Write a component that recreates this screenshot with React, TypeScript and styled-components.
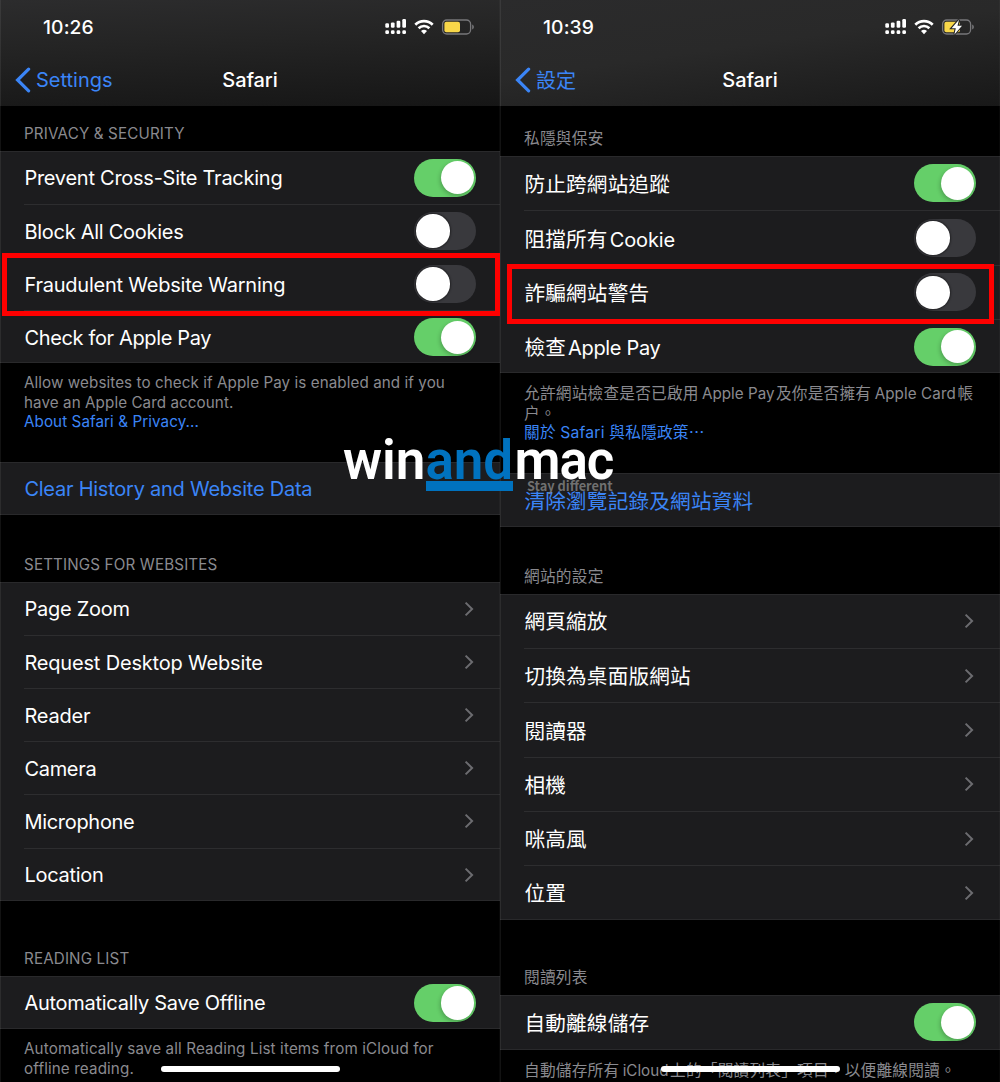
import React from "react";
import styled, { createGlobalStyle, css } from "styled-components";

const GlobalStyle = createGlobalStyle`
  *, *::before, *::after { box-sizing: border-box; }
  body { margin: 0; background: #000; overflow: hidden; }
`;

const LATIN = `"Inter", "Noto Sans CJK TC", sans-serif`;
const CJK = `"Inter", "Noto Sans CJK TC", "Noto Sans", sans-serif`;
const BLUE = "#3b85f7";

const Stage = styled.main`
  position: relative;
  display: grid;
  grid-template-columns: 500px 500px;
  width: 1000px;
  height: 1082px;
  overflow: hidden;
  background: #000;
`;

const Phone = styled.section<{ $cjk?: boolean }>`
  position: relative;
  display: flex;
  flex-direction: column;
  height: 1082px;
  overflow: hidden;
  background: #000;
  color: #fff;
  font-family: ${(p) => (p.$cjk ? CJK : LATIN)};
  --body-size: ${(p) => (p.$cjk ? "20.6px" : "20px")};
  --body-track: ${(p) => (p.$cjk ? "0.22px" : "-0.2px")};
  --note-size: ${(p) => (p.$cjk ? "15.7px" : "15.2px")};
  --note-track: ${(p) => (p.$cjk ? "0.19px" : "0.08px")};
  --row: ${(p) => (p.$cjk ? "54.3px" : "53.1px")};
  --label-drop: ${(p) => (p.$cjk ? "3px" : "1px")};
  --note-top: ${(p) => (p.$cjk ? "11px" : "10px")};
  &::after {
    content: "";
    position: absolute;
    inset: 0;
    box-shadow: inset 1px 0 rgba(255, 255, 255, 0.07), inset -1px 0 rgba(255, 255, 255, 0.03);
    pointer-events: none;
  }
`;

const Header = styled.header<{ $light?: boolean }>`
  flex: none;
  height: 106px;
  background: ${(p) =>
    p.$light
      ? "linear-gradient(172deg, #2b2b2c 0%, #292929 45%, #181818 100%)"
      : "linear-gradient(178deg, #2c2c2d 0%, #242424 40%, #161616 100%)"};
`;

const StatusBar = styled.div`
  display: flex;
  align-items: center;
  justify-content: space-between;
  height: 54px;
  padding: 0 26px 0 43px;
`;

const Clock = styled.span`
  font-size: 19.3px;
  font-weight: 550;
  line-height: 24px;
  letter-spacing: 0.1px;
`;

const StatusIcons = styled.svg`
  display: block;
  width: 89px;
  height: 18px;
`;

const NavBar = styled.nav`
  display: grid;
  grid-template-columns: 1fr auto 1fr;
  align-items: center;
  height: 52px;
  padding-left: 15px;
`;

const Back = styled.a`
  display: flex;
  align-items: center;
  gap: 5px;
  color: ${BLUE};
  font-size: 20px;
  line-height: 28px;
`;

const BackText = styled.span`
  padding-top: calc(var(--label-drop) - 1px);
`;

const BackIcon = styled.svg`
  display: block;
  width: 16px;
  height: 26px;
`;

const Title = styled.h1`
  margin: 0 0 0 -15px;
  font-size: 20px;
  font-weight: 550;
  line-height: 28px;
  letter-spacing: -0.1px;
`;

const Caption = styled.h2<{ $height: number }>`
  flex: none;
  display: flex;
  align-items: flex-end;
  height: ${(p) => p.$height}px;
  margin: 0;
  padding: 0 24px 8px;
  color: #8a8a8f;
  font-size: var(--note-size);
  font-weight: 400;
  line-height: 19px;
  letter-spacing: calc(var(--note-track) + 0.06px);
`;

const Group = styled.div`
  flex: none;
  background: #1c1c1e;
  box-shadow: inset 0 1px #29292b, inset 0 -1px #29292b;
`;

const Row = styled.div`
  display: flex;
  align-items: stretch;
  height: var(--row);
  padding-left: 24px;
`;

const RowBody = styled.div<{ $divided: boolean }>`
  flex: 1;
  display: flex;
  align-items: center;
  justify-content: space-between;
  padding-right: 24px;
  ${(p) => p.$divided && css`border-top: 1px solid #2d2d2f;`}
`;

const Label = styled.span<{ $link?: boolean; $track?: number }>`
  padding: var(--label-drop) 0 0 0.4px;
  color: ${(p) => (p.$link ? BLUE : "#fff")};
  font-size: var(--body-size);
  line-height: 28px;
  letter-spacing: ${(p) => (p.$track !== undefined ? `${p.$track}px` : "var(--body-track)")};
  white-space: pre;
`;

const Switch = styled.span<{ $on: boolean }>`
  display: flex;
  align-items: center;
  justify-content: ${(p) => (p.$on ? "flex-end" : "flex-start")};
  width: 62px;
  height: 38px;
  padding: 0 2px;
  border-radius: 19px;
  background: ${(p) => (p.$on ? "#65cf69" : "#39393d")};
`;

const Knob = styled.i<{ $on: boolean }>`
  width: 33.5px;
  height: 33.5px;
  border-radius: 50%;
  background: #fff;
  box-shadow: ${(p) => (p.$on ? "-1px 2px 4px rgba(0,0,0,.22)" : "0 0 2px 1px rgba(0,0,0,.4)")};
`;

const Chevron = styled.svg`
  display: block;
  width: 12px;
  height: 18px;
`;

const Note = styled.div<{ $height?: number }>`
  flex: none;
  height: ${(p) => (p.$height ? `${p.$height}px` : "auto")};
  padding: var(--note-top) 0 0 24px;
  color: #8a8a8f;
  font-size: var(--note-size);
  line-height: 19.3px;
  letter-spacing: var(--note-track);
`;

const NoteLine = styled.div<{ $link?: boolean; $track?: number }>`
  height: 19.3px;
  white-space: pre;
  ${(p) => p.$link && css`color: ${BLUE};`}
  ${(p) => p.$track !== undefined && css`letter-spacing: ${p.$track}px;`}
`;

const Latin = styled.span<{ $small?: boolean; $track?: number }>`
  margin: ${(p) => (p.$small ? "0 1.5px 0 3.4px" : "0 0 0 2px")};
  font-size: ${(p) => (p.$small ? "15.2px" : "20px")};
  letter-spacing: ${(p) => p.$track ?? 0}px;
`;

const HomeBar = styled.div`
  position: absolute;
  left: 161px;
  top: 1066px;
  width: 178.5px;
  height: 6.4px;
  border-radius: 3.2px;
  background: #fff;
`;

const Highlight = styled.div<{ $x: number; $y: number; $w: number; $h: number }>`
  position: absolute;
  left: ${(p) => p.$x}px;
  top: ${(p) => p.$y}px;
  width: ${(p) => p.$w}px;
  height: ${(p) => p.$h}px;
  border: 5px solid #fe0000;
`;

const Watermark = styled.div`
  position: absolute;
  left: 343px;
  top: 430px;
  width: 272px;
  height: 64px;
`;

const Wordmark = styled.div`
  width: max-content;
  color: #fff;
  font: 600 56px/60px "Roboto", sans-serif;
  transform: scaleX(0.945);
  transform-origin: 0 0;
`;

const Accent = styled.span`
  color: #0072bf;
  margin-right: 1.5px;
`;

const Tail = styled.span`
  letter-spacing: -1.2px;
`;

const Underline = styled.div`
  position: absolute;
  left: 83px;
  top: 51px;
  width: 87px;
  height: 10px;
  background: #0072bf;
`;

const Tagline = styled.div`
  position: absolute;
  left: 184px;
  top: 46px;
  color: rgba(128, 128, 128, 0.85);
  font: 700 12.8px/20px "Noto Sans CJK TC", sans-serif;
  white-space: nowrap;
`;

function Status({ charging }: { charging?: boolean }) {
  const bars = [
    [0.3, 4.2],
    [5.9, 3.4],
    [11.6, 1.8],
    [17.3, 0],
  ];
  return (
    <StatusIcons viewBox="0 0 89 18">
      {bars.map(([x, y]) => (
        <g key={x} fill="#fff">
          <rect x={x} y={y + 1} width="3.7" height={8.7 - y} rx="1.2" />
          <rect x={x} y="12.3" width="3.7" height="3.8" rx="1.4" />
        </g>
      ))}
      <g fill="none" stroke="#fff" strokeWidth="2.7">
        <path d="M30.3 6.7a12.4 12.4 0 0 1 17.4 0" />
        <path d="M33.6 10.2a7.7 7.7 0 0 1 10.8 0" />
      </g>
      <path d="M39 16.3l-3-3.2a4.5 4.5 0 0 1 6 0z" fill="#fff" />
      <rect x="57.6" y="2" width="28" height="14" rx="4.2" fill="none" stroke="#77777a" strokeWidth="1.3" />
      <path d="M87.2 6.6c2.2.8 2.2 4 0 4.8z" fill="#77777a" />
      <rect x="59.4" y="3.8" width="15.6" height="10.4" rx="2" fill="#f8d749" />
      {charging && (
        <path
          d="M74 1.8l-7.4 8.4h4.2l-1.4 6.2 7.6-8.7h-4.5z"
          fill="#fff"
          stroke="#262626"
          strokeWidth="2.2"
          paintOrder="stroke"
        />
      )}
    </StatusIcons>
  );
}

function TopBar({ time, back, charging }: { time: string; back: string; charging?: boolean }) {
  return (
    <Header $light={charging}>
      <StatusBar>
        <Clock>{time}</Clock>
        <Status charging={charging} />
      </StatusBar>
      <NavBar>
        <Back>
          <BackIcon viewBox="0 0 16 26">
            <path d="M13.6 2.2L2.6 13l11 10.8" fill="none" stroke={BLUE} strokeWidth="3.2" strokeLinecap="round" strokeLinejoin="miter" />
          </BackIcon>
          <BackText>{back}</BackText>
        </Back>
        <Title>Safari</Title>
      </NavBar>
    </Header>
  );
}

type Item = { label: React.ReactNode; on?: boolean; link?: boolean; track?: number };

function List({ items }: { items: Item[] }) {
  return (
    <Group>
      {items.map((item, i) => (
        <Row key={i}>
          <RowBody $divided={i > 0}>
            <Label $link={item.link} $track={item.track}>
              {item.label}
            </Label>
            {item.on !== undefined ? (
              <Switch $on={item.on}>
                <Knob $on={item.on} />
              </Switch>
            ) : (
              !item.link && (
                <Chevron viewBox="0 0 12 18">
                  <path d="M1.6 2.6L8.1 9l-6.5 6.4" fill="none" stroke="#6c6c70" strokeWidth="2" />
                </Chevron>
              )
            )}
          </RowBody>
        </Row>
      ))}
    </Group>
  );
}

export default function App() {
  return (
    <>
      <GlobalStyle />
      <Stage>
        <Phone lang="en">
          <TopBar time="10:26" back="Settings" />
          <Caption $height={45}>PRIVACY &amp; SECURITY</Caption>
          <List
            items={[
              { label: "Prevent Cross-Site Tracking", on: true, track: -0.26 },
              { label: "Block All Cookies", on: false, track: -0.27 },
              { label: "Fraudulent Website Warning", on: false, track: -0.22 },
              { label: "Check for Apple Pay", on: true, track: -0.35 },
            ]}
          />
          <Note $height={98.6}>
            <NoteLine>Allow websites to check if Apple Pay is enabled and if you</NoteLine>
            <NoteLine>have an Apple Card account.</NoteLine>
            <NoteLine $link>About Safari &amp; Privacy...</NoteLine>
          </Note>
          <List items={[{ label: "Clear History and Website Data", link: true, track: -0.24 }]} />
          <Caption $height={67}>SETTINGS FOR WEBSITES</Caption>
          <List
            items={[
              { label: "Page Zoom", track: -0.25 },
              { label: "Request Desktop Website", track: -0.18 },
              { label: "Reader" },
              { label: "Camera", track: -0.3 },
              { label: "Microphone", track: -0.3 },
              { label: "Location", track: -0.28 },
            ]}
          />
          <Caption $height={75.6}>READING LIST</Caption>
          <List items={[{ label: "Automatically Save Offline", on: true, track: -0.27 }]} />
          <Note>
            <NoteLine $track={0.13}>Automatically save all Reading List items from iCloud for</NoteLine>
            <NoteLine $track={0.13}>offline reading.</NoteLine>
          </Note>
          <HomeBar />
        </Phone>

        <Phone $cjk lang="zh-Hant">
          <TopBar time="10:39" back="設定" charging />
          <Caption $height={50.2}>私隱與保安</Caption>
          <List
            items={[
              { label: "防止跨網站追蹤", on: true },
              { label: <>阻擋所有<Latin $track={-0.1}>Cookie</Latin></>, on: false },
              { label: "詐騙網站警告", on: false },
              { label: <>檢查<Latin $track={-0.33}>Apple Pay</Latin></>, on: true },
            ]}
          />
          <Note $height={99.6}>
            <NoteLine>
              允許網站檢查是否已啟用<Latin $small>Apple Pay</Latin>及你是否擁有
              <Latin $small $track={0.1}>Apple Card</Latin>帳
            </NoteLine>
            <NoteLine>户。</NoteLine>
            <NoteLine $link>關於 Safari 與私隱政策⋯</NoteLine>
          </Note>
          <List items={[{ label: "清除瀏覽記錄及網站資料", link: true }]} />
          <Caption $height={66.5}>網站的設定</Caption>
          <List
            items={[
              { label: "網頁縮放" },
              { label: "切換為桌面版網站" },
              { label: "閱讀器" },
              { label: "相機" },
              { label: "咪高風" },
              { label: "位置" },
            ]}
          />
          <Caption $height={75.8}>閱讀列表</Caption>
          <List items={[{ label: "自動離線儲存", on: true }]} />
          <Note>
            <NoteLine>
              自動儲存所有<Latin $small>iCloud</Latin>上的「閱讀列表」項目，以便離線閱讀。
            </NoteLine>
          </Note>
          <HomeBar />
        </Phone>

        <Highlight $x={2} $y={253} $w={498} $h={63} />
        <Highlight $x={507} $y={264} $w={487} $h={60} />

        <Watermark>
          <Wordmark>
            win<Accent>and</Accent>
            <Tail>mac</Tail>
          </Wordmark>
          <Underline />
          <Tagline>Stay different</Tagline>
        </Watermark>
      </Stage>
    </>
  );
}
